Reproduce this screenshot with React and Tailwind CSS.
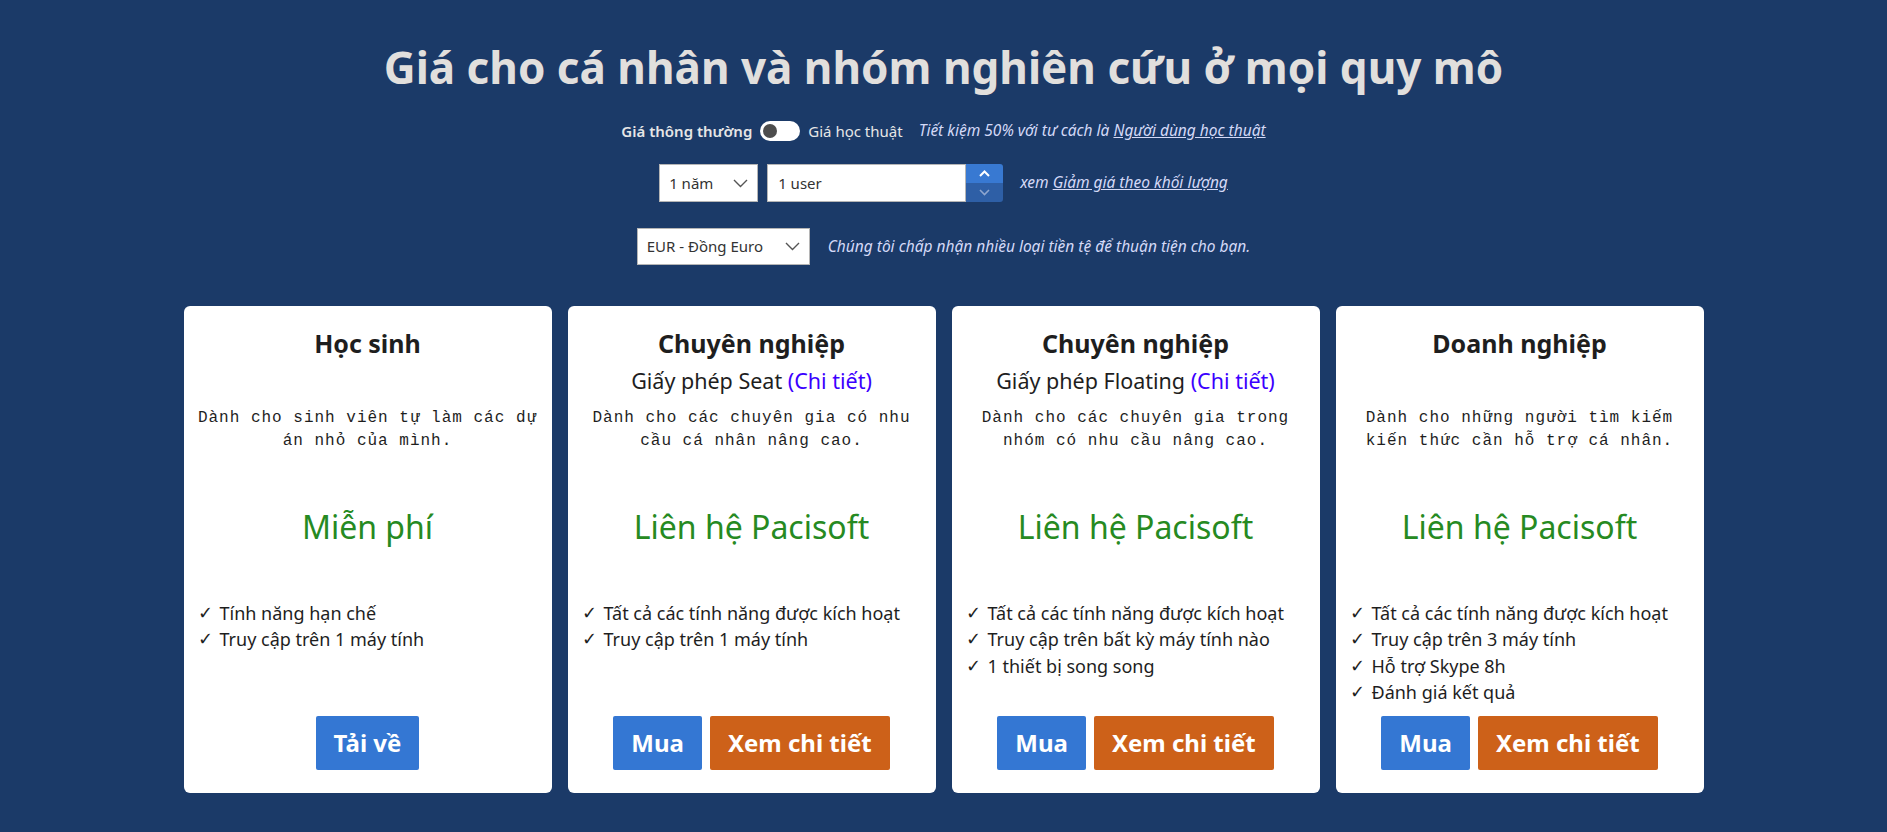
import React from 'react';

const plans = [
    {
        title: 'Học sinh',
        sub: null,
        desc: 'Dành cho sinh viên tự làm các dự án nhỏ của mình.',
        price: 'Miễn phí',
        features: ['Tính năng hạn chế', 'Truy cập trên 1 máy tính'],
        buttons: [{ label: 'Tải về', color: 'bg-[#3477d3]' }],
    },
    {
        title: 'Chuyên nghiệp',
        sub: 'Giấy phép Seat',
        desc: 'Dành cho các chuyên gia có nhu cầu cá nhân nâng cao.',
        price: 'Liên hệ Pacisoft',
        features: ['Tất cả các tính năng được kích hoạt', 'Truy cập trên 1 máy tính'],
        buttons: [
            { label: 'Mua', color: 'bg-[#3477d3]' },
            { label: 'Xem chi tiết', color: 'bg-[#cd6119]' },
        ],
    },
    {
        title: 'Chuyên nghiệp',
        sub: 'Giấy phép Floating',
        desc: 'Dành cho các chuyên gia trong nhóm có nhu cầu nâng cao.',
        price: 'Liên hệ Pacisoft',
        features: ['Tất cả các tính năng được kích hoạt', 'Truy cập trên bất kỳ máy tính nào', '1 thiết bị song song'],
        buttons: [
            { label: 'Mua', color: 'bg-[#3477d3]' },
            { label: 'Xem chi tiết', color: 'bg-[#cd6119]' },
        ],
    },
    {
        title: 'Doanh nghiệp',
        sub: null,
        desc: 'Dành cho những người tìm kiếm kiến thức cần hỗ trợ cá nhân.',
        price: 'Liên hệ Pacisoft',
        features: ['Tất cả các tính năng được kích hoạt', 'Truy cập trên 3 máy tính', 'Hỗ trợ Skype 8h', 'Đánh giá kết quả'],
        buttons: [
            { label: 'Mua', color: 'bg-[#3477d3]' },
            { label: 'Xem chi tiết', color: 'bg-[#cd6119]' },
        ],
    },
];

const Chevron = () => (
    <svg width="15" height="9" viewBox="0 0 15 9" fill="none">
        <polyline points="1,1 7.5,7.5 14,1" stroke="#555" strokeWidth="1.4" />
    </svg>
);

const Select = ({ label, width }) => (
    <div className={`flex items-center justify-between h-full bg-white border border-[#b5b5b5] pl-[9px] pr-[9px] text-[15px] text-[#333] ${width}`}>
        <span>{label}</span>
        <Chevron />
    </div>
);

const PlanCard = ({ plan }) => (
    <div className="flex flex-col h-[487px] bg-white rounded-[6px] px-3 pt-[22px] pb-[23px] text-[#1e1e1e]">
        <h3 className="text-center text-[25px] leading-[30px] font-bold">{plan.title}</h3>
        <div className="mt-[9px] h-[28px] text-center text-[21.5px] leading-[28px]">
            {plan.sub && (
                <span>
                    {plan.sub} <span className="text-[#3b00ff]">(Chi tiết)</span>
                </span>
            )}
        </div>
        <p className="mt-[12px] h-[45px] text-center font-['Liberation_Mono',monospace] text-[16px] leading-[22.5px] tracking-[1px]">
            {plan.desc}
        </p>
        <div className="mt-[51px] text-center text-[32px] leading-[48px] text-[#268a22]">{plan.price}</div>
        <ul className="mt-[49px] pl-[2px] text-[18px] leading-[26.3px]">
            {plan.features.map((f) => (
                <li key={f} className="flex">
                    <span className="w-[22px] font-['DejaVu_Sans',sans-serif] text-[18px] font-light">✓</span>
                    <span>{f}</span>
                </li>
            ))}
        </ul>
        <div className="mt-auto flex justify-center gap-2">
            {plan.buttons.map((b) => (
                <button
                    key={b.label}
                    className={`${b.color} h-[54px] px-[18px] rounded-[2px] text-white text-[24px] font-bold`}
                >
                    {b.label}
                </button>
            ))}
        </div>
    </div>
);

export default function App() {
    return (
        <div className="min-h-screen bg-[#1b3a68] pt-[39px] font-['Noto_Sans',sans-serif]">
            <h1 className="text-center text-[44px] leading-[56px] font-bold text-[#e1dfdd]">
                Giá cho cá nhân và nhóm nghiên cứu ở mọi quy mô
            </h1>

            {/* Toggle row */}
            <div className="mt-[26px] h-5 flex items-center justify-center text-[15px]">
                <span className="font-semibold text-[#e6e6e6]">Giá thông thường</span>
                <span className="mx-2 flex items-center w-[40px] h-[20px] rounded-full bg-white pl-[3px]">
                    <span className="w-[14px] h-[14px] rounded-full bg-[#4d4d4d]" />
                </span>
                <span className="text-[#e6e6e6]">Giá học thuật</span>
                <span className="ml-4 italic text-[15.5px] text-[#d4d9f7]">
                    Tiết kiệm 50% với tư cách là <span className="underline">Người dùng học thuật</span>
                </span>
            </div>

            {/* Duration + users */}
            <div className="mt-[23px] h-[38px] flex items-center justify-center">
                <Select label="1 năm" width="w-[99px]" />
                <div className="ml-[9px] flex h-full">
                    <div className="w-[199px] bg-white border border-[#b5b5b5] flex items-center pl-[10px] text-[15px] text-[#333]">
                        1 user
                    </div>
                    <div className="w-[37px] flex flex-col rounded-r-[3px] overflow-hidden">
                        <div className="flex-1 bg-[#3879d2] flex items-center justify-center">
                            <svg width="11" height="7" viewBox="0 0 11 7" fill="none">
                                <polyline points="1,6 5.5,1.5 10,6" stroke="#fff" strokeWidth="2" />
                            </svg>
                        </div>
                        <div className="flex-1 bg-[#2e5fa6] flex items-center justify-center">
                            <svg width="11" height="7" viewBox="0 0 11 7" fill="none">
                                <polyline points="1,1 5.5,5.5 10,1" stroke="#8ea6cf" strokeWidth="1.6" />
                            </svg>
                        </div>
                    </div>
                </div>
                <span className="ml-[17px] italic text-[15.5px] text-[#d4d9f7]">
                    xem <span className="underline">Giảm giá theo khối lượng</span>
                </span>
            </div>

            {/* Currency */}
            <div className="mt-[26px] h-[37px] flex items-center justify-center">
                <Select label="EUR - Đồng Euro" width="w-[173px]" />
                <span className="ml-[18px] italic text-[15.5px] text-[#d4d9f7]">
                    Chúng tôi chấp nhận nhiều loại tiền tệ để thuận tiện cho bạn.
                </span>
            </div>

            {/* Plans */}
            <div className="mt-[41px] mx-auto w-[1520px] grid grid-cols-4 gap-4">
                {plans.map((p, i) => (
                    <PlanCard key={i} plan={p} />
                ))}
            </div>
        </div>
    );
}
